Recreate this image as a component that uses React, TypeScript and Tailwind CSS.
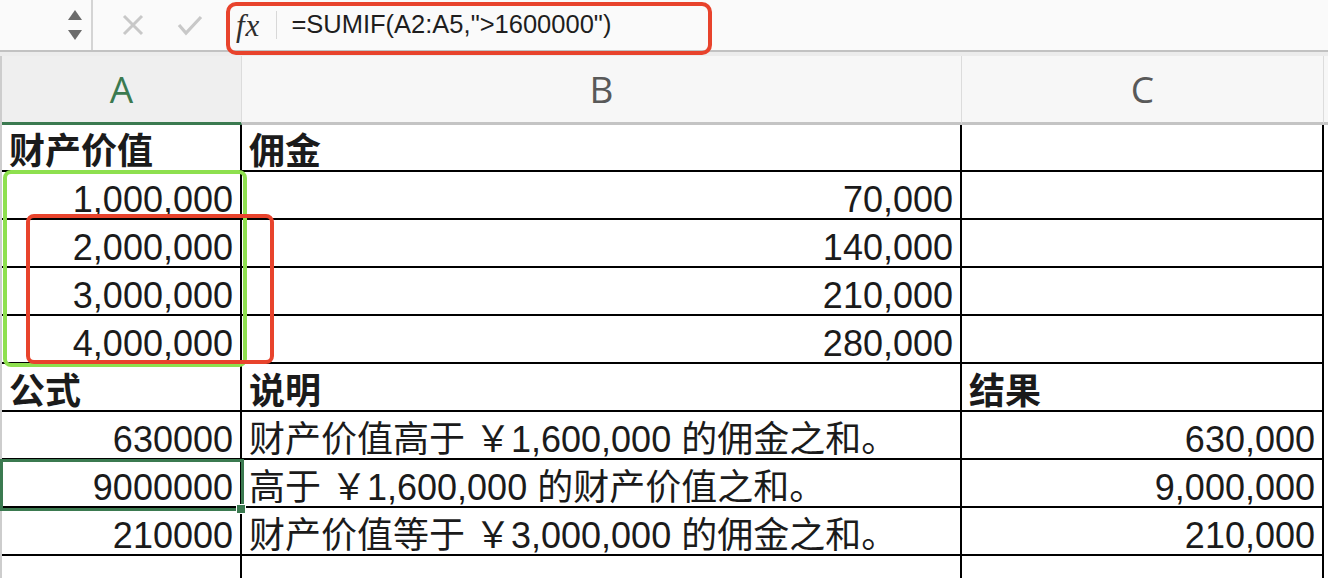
import React from 'react';

const font = { fontFamily: '"Liberation Sans", "Noto Sans CJK SC", sans-serif' };

type Cell = { text: string; right?: boolean; bold?: boolean };

const rows: Cell[][] = [
  [{ text: '财产价值', bold: true }, { text: '佣金', bold: true }, { text: '' }],
  [{ text: '1,000,000', right: true }, { text: '70,000', right: true }, { text: '' }],
  [{ text: '2,000,000', right: true }, { text: '140,000', right: true }, { text: '' }],
  [{ text: '3,000,000', right: true }, { text: '210,000', right: true }, { text: '' }],
  [{ text: '4,000,000', right: true }, { text: '280,000', right: true }, { text: '' }],
  [{ text: '公式', bold: true }, { text: '说明', bold: true }, { text: '结果', bold: true }],
  [{ text: '630000', right: true }, { text: '财产价值高于 ￥1,600,000 的佣金之和。' }, { text: '630,000', right: true }],
  [{ text: '9000000', right: true }, { text: '高于 ￥1,600,000 的财产价值之和。' }, { text: '9,000,000', right: true }],
  [{ text: '210000', right: true }, { text: '财产价值等于 ￥3,000,000 的佣金之和。' }, { text: '210,000', right: true }],
  [{ text: '' }, { text: '' }, { text: '' }],
];

const widths = ['w-[240px]', 'w-[720px]', 'w-[362px]'];

const FormulaBar = () => (
  <div className="flex h-[50px] items-center bg-[#fafafa]">
    <div className="flex h-full w-[91px] flex-col items-end justify-center gap-[10px] pr-[9px]">
      <svg width="14" height="10" viewBox="0 0 14 10">
        <path d="M7 0 L14 10 L0 10 Z" fill="#6b6b6b" />
      </svg>
      <svg width="14" height="10" viewBox="0 0 14 10">
        <path d="M0 0 L14 0 L7 10 Z" fill="#6b6b6b" />
      </svg>
    </div>
    <div className="h-full w-[2px] bg-[#d4d4d4]" />
    <div className="flex h-full w-[133px] items-center gap-[33px] pl-[29px]">
      <svg width="22" height="22" viewBox="0 0 22 22">
        <path d="M2 2 L20 20 M20 2 L2 20" stroke="#c8c8c8" strokeWidth="3" />
      </svg>
      <svg width="26" height="22" viewBox="0 0 26 22">
        <path d="M2 11 L9 19 L24 3" stroke="#c8c8c8" strokeWidth="3.2" fill="none" />
      </svg>
    </div>
    <div className="flex h-full items-center">
      <span
        className="ml-[10px] text-[31px] italic leading-none tracking-[1px] text-[#2e2e2e]"
        style={{ fontFamily: '"Liberation Serif", serif' }}
      >
        fx
      </span>
      <div className="ml-[16px] h-[28px] w-[1px] bg-[#d8d8d8]" />
      <span className="ml-[14px] text-[25.5px] leading-none text-[#1e1e1e]" style={font}>
        =SUMIF(A2:A5,"&gt;1600000")
      </span>
    </div>
  </div>
);

const HeaderRow = () => (
  <div className="flex h-[69px]">
    <div className="w-[2px] bg-[#cdcdcd]" />
    <div className="flex w-[240px] items-center justify-center border-r border-b-[3px] border-r-[#dcdcdc] border-b-[#3b7a50] bg-[#efefef]">
      <span className="text-[37px] text-[#3b7a50]" style={{ fontFamily: '"Open Sans", sans-serif' }}>A</span>
    </div>
    {['B', 'C'].map((l, i) => (
      <div
        key={l}
        className={`flex ${i === 0 ? 'w-[720px]' : 'w-[362px]'} items-center justify-center border-r border-b-[3px] border-r-[#dcdcdc] border-b-[#c4c4c4] bg-[#f7f7f7]`}
      >
        <span className="text-[37px] text-[#595959]" style={{ fontFamily: '"Open Sans", sans-serif' }}>{l}</span>
      </div>
    ))}
    <div className="flex-1 border-b-[3px] border-b-[#c4c4c4] bg-[#f7f7f7]" />
  </div>
);

export default function App() {
  return (
    <div className="relative h-[578px] w-[1328px] overflow-hidden bg-white" style={font}>
      <FormulaBar />
      <div className="h-[2px] bg-[#c2c2c2]" />
      <div className="h-[4px] bg-[#ececec]" />
      <HeaderRow />
      <div className="flex">
        <div className="w-[2px] bg-[#cdcdcd]" />
        <div className="flex flex-col">
          {rows.map((row, ri) => (
            <div key={ri} className={`flex ${ri === 0 ? 'h-[47px]' : 'h-[48px]'}`}>
              {row.map((c, ci) => (
                <div
                  key={ci}
                  className={`${widths[ci]} flex items-end border-r-2 border-b-2 border-black px-[7px] ${
                    c.right ? 'justify-end' : 'justify-start'
                  }`}
                >
                  <span
                    className={`whitespace-nowrap text-[36px] leading-none text-[#1b1b1b] ${
                      c.bold ? 'font-bold' : 'font-normal'
                    }`}
                  >
                    {c.text}
                  </span>
                </div>
              ))}
            </div>
          ))}
        </div>
      </div>

      {/* formula highlight */}
      <div className="absolute left-[226px] top-[2px] h-[53px] w-[486px] rounded-[10px] border-4 border-[#e8432c]" />
      {/* criteria range */}
      <div className="absolute left-[3px] top-[170px] h-[197px] w-[244px] rounded-[8px] border-4 border-[#8ee04f]" />
      {/* sum range */}
      <div className="absolute left-[26px] top-[214px] h-[150px] w-[248px] rounded-[8px] border-4 border-[#e8432c]" />
      {/* selected cell */}
      <div className="absolute left-0 top-[459px] h-[52px] w-[244px] border-[3px] border-[#3b7a50]" />
      <div className="absolute left-[236px] top-[504px] h-[10px] w-[10px] border border-white bg-[#3b7a50]" />
    </div>
  );
}
